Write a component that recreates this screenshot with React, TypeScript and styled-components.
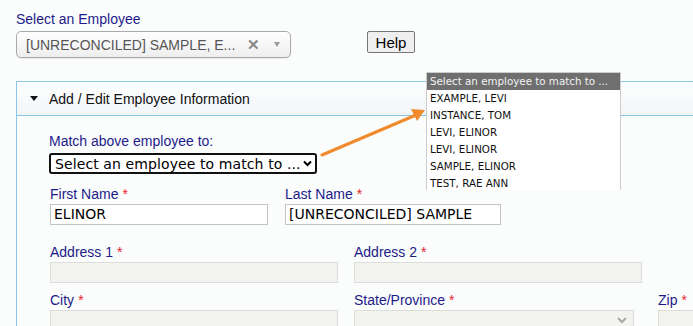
import styled, { createGlobalStyle } from 'styled-components'

const GlobalStyle = createGlobalStyle`
	html, body {
		margin: 0;
		padding: 0;
		background: #fbfdfd;
		font-family: "Liberation Sans", Arial, sans-serif;
		overflow: hidden;
	}
`

const Page = styled.div`
	position: relative;
	width: 693px;
	height: 326px;
	padding: 11px 0 0 16px;
	box-sizing: border-box;
	overflow: hidden;
`

const Label = styled.div<{ gap?: number }>`
	font-size: 14px;
	line-height: 16px;
	color: #1b1b8a;
	height: 16px;
	margin-bottom: ${p => p.gap ?? 2}px;
	white-space: nowrap;
`

const Req = styled.span`
	color: #e8212b;
	margin-left: 4px;
`

const TopRow = styled.div`
	display: flex;
	align-items: flex-start;
`

const ComboBox = styled.div`
	width: 275px;
	height: 27px;
	box-sizing: border-box;
	border: 1px solid #aaa;
	border-radius: 5px;
	background: linear-gradient(#ffffff, #eeeeee);
	display: flex;
	align-items: center;
	padding: 0 10px 0 9px;
	font-size: 14px;
	color: #555;
	box-shadow: 0 1px 1px rgba(0, 0, 0, 0.08);
`

const ComboText = styled.span`
	flex: 1;
	white-space: nowrap;
`

const ClearX = styled.span`
	color: #888;
	font-weight: bold;
	font-size: 15px;
	margin-right: 14px;
`

const SmallCaret = styled.span`
	width: 0;
	height: 0;
	border-left: 3px solid transparent;
	border-right: 3px solid transparent;
	border-top: 5px solid #999;
`

const HelpButton = styled.button`
	margin-left: 76px;
	height: 22px;
	width: 48px;
	padding: 0;
	border: 1px solid #767676;
	border-radius: 2px;
	background: #efefef;
	font-family: "Liberation Sans", Arial, sans-serif;
	font-size: 15px;
	color: #000;
`

const Panel = styled.div`
	margin-top: 23px;
	border-left: 1px solid #8cc4ea;
	border-top: 1px solid #8cc4ea;
	height: 300px;
`

const PanelHeader = styled.div`
	height: 33px;
	border-bottom: 1px solid #8cc4ea;
	background: linear-gradient(#fdfefe, #f1f5f8);
	display: flex;
	align-items: center;
	padding-left: 13px;
	font-size: 14px;
	color: #111;
`

const Triangle = styled.span`
	width: 0;
	height: 0;
	border-left: 4px solid transparent;
	border-right: 4px solid transparent;
	border-top: 5px solid #111;
	margin-right: 11px;
`

const PanelBody = styled.div`
	padding: 17px 0 0 32px;
`

const MatchSelect = styled.div`
	width: 268px;
	height: 21px;
	box-sizing: border-box;
	border: 2px solid #111;
	border-radius: 3px;
	background: #fff;
	display: flex;
	align-items: center;
	padding: 0 3px 0 4px;
	font-family: "DejaVu Sans", Verdana, sans-serif;
	font-size: 14px;
	color: #000;
`

const MatchText = styled.span`
	flex: 1;
	white-space: nowrap;
	letter-spacing: 0.1px;
`

const FormRow = styled.div<{ top: number }>`
	display: flex;
	margin-top: ${p => p.top}px;
	padding-left: 1px;
`

const Field = styled.div<{ width: number; gap: number }>`
	width: ${p => p.width}px;
	margin-right: ${p => p.gap}px;
	flex-shrink: 0;
`

const TextInput = styled.div<{ disabled?: boolean }>`
	height: 21px;
	box-sizing: border-box;
	border: 1px solid ${p => (p.disabled ? '#dcdcd8' : '#c4c4c4')};
	background: ${p => (p.disabled ? '#f3f3f0' : '#fff')};
	font-family: "DejaVu Sans", Verdana, sans-serif;
	font-size: 14px;
	line-height: 19px;
	padding-left: 3px;
	color: #000;
	display: flex;
	align-items: center;
	justify-content: flex-end;
	padding-right: 6px;
`

const InputValue = styled.span`
	flex: 1;
	white-space: nowrap;
`

const Chevron = () => (
	<svg width="10" height="7" viewBox="0 0 10 7">
		<path d="M1 1 L5 5 L9 1" fill="none" stroke="#aaa" strokeWidth="2" />
	</svg>
)

const SelectChevron = () => (
	<svg width="9" height="7" viewBox="0 0 9 7">
		<path d="M1 1.5 L4.5 5 L8 1.5" fill="none" stroke="#000" strokeWidth="2" />
	</svg>
)

const ListBox = styled.div`
	position: absolute;
	left: 426px;
	top: 72px;
	width: 195px;
	height: 118px;
	overflow: hidden;
	background: #fff;
	border: 1px solid #ccc;
	border-bottom: none;
	box-sizing: border-box;
	font-family: "DejaVu Sans", Verdana, sans-serif;
	font-size: 10.3px;
	color: #111;
`

const ListItem = styled.div<{ header?: boolean }>`
	height: 17px;
	line-height: 17px;
	padding-left: 3px;
	white-space: nowrap;
	background: ${p => (p.header ? '#6f6f6f' : '#fff')};
	color: ${p => (p.header ? '#f2f2f2' : '#111')};
`

const Arrow = styled.svg`
	position: absolute;
	left: 318px;
	top: 105px;
`

const employees = ['EXAMPLE, LEVI', 'INSTANCE, TOM', 'LEVI, ELINOR', 'LEVI, ELINOR', 'SAMPLE, ELINOR', 'TEST, RAE ANN']

export default function App() {
	return (
		<Page>
			<GlobalStyle />
			<Label gap={4}>Select an Employee</Label>
			<TopRow>
				<ComboBox>
					<ComboText>[UNRECONCILED] SAMPLE, E...</ComboText>
					<ClearX>✕</ClearX>
					<SmallCaret />
				</ComboBox>
				<HelpButton>Help</HelpButton>
			</TopRow>
			<Panel>
				<PanelHeader>
					<Triangle />
					Add / Edit Employee Information
				</PanelHeader>
				<PanelBody>
					<Label gap={4}>Match above employee to:</Label>
					<MatchSelect>
						<MatchText>Select an employee to match to ...</MatchText>
						<SelectChevron />
					</MatchSelect>
					<FormRow top={12}>
						<Field width={218} gap={17}>
							<Label>First Name<Req>*</Req></Label>
							<TextInput><InputValue>ELINOR</InputValue></TextInput>
						</Field>
						<Field width={216} gap={0}>
							<Label>Last Name<Req>*</Req></Label>
							<TextInput><InputValue>[UNRECONCILED] SAMPLE</InputValue></TextInput>
						</Field>
					</FormRow>
					<FormRow top={19}>
						<Field width={288} gap={16}>
							<Label>Address 1<Req>*</Req></Label>
							<TextInput disabled />
						</Field>
						<Field width={288} gap={0}>
							<Label>Address 2<Req>*</Req></Label>
							<TextInput disabled />
						</Field>
					</FormRow>
					<FormRow top={9}>
						<Field width={288} gap={16}>
							<Label>City<Req>*</Req></Label>
							<TextInput disabled />
						</Field>
						<Field width={280} gap={24}>
							<Label>State/Province<Req>*</Req></Label>
							<TextInput disabled><Chevron /></TextInput>
						</Field>
						<Field width={120} gap={0}>
							<Label>Zip<Req>*</Req></Label>
							<TextInput disabled />
						</Field>
					</FormRow>
				</PanelBody>
			</Panel>
			<Arrow width="110" height="60" viewBox="0 0 110 60">
				<line x1="4" y1="50" x2="98" y2="10" stroke="#f08a2c" strokeWidth="3" strokeLinecap="round" />
				<path d="M107 5 L93 4 L99 16 Z" fill="#f08a2c" />
			</Arrow>
			<ListBox>
				<ListItem header>Select an employee to match to ...</ListItem>
				{employees.map((e, i) => (
					<ListItem key={i}>{e}</ListItem>
				))}
			</ListBox>
		</Page>
	)
}
